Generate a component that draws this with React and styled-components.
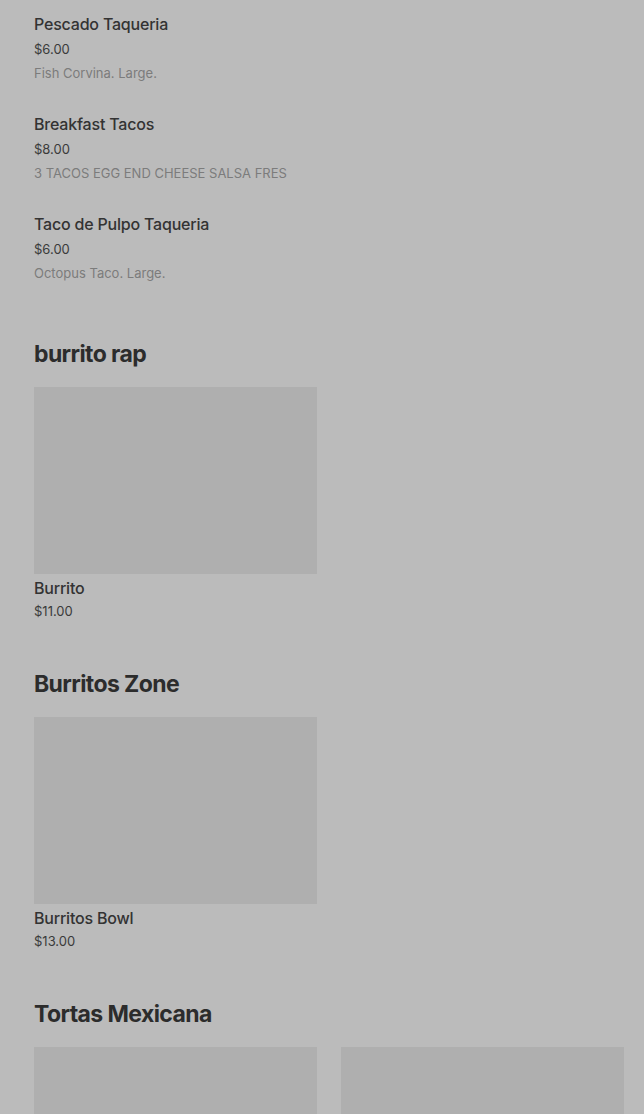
import React from 'react'
import styled, { createGlobalStyle } from 'styled-components'

const GlobalStyle = createGlobalStyle`
  html, body {
    margin: 0;
    padding: 0;
    background: #bbbbbb;
  }
  body {
    font-family: Inter, "Liberation Sans", sans-serif;
    color: #333333;
  }
`

const Page = styled.div`
  padding: 0 20px 0 34px;
`

const Section = styled.section`
  padding: ${p => (p.first ? '0' : '38px 0 10px')};
`

const Heading = styled.h2`
  margin: 0 0 17px;
  font-size: 23px;
  line-height: 32px;
  font-weight: 700;
  letter-spacing: -0.6px;
  color: #2c2c2c;
`

const ItemRow = styled.div`
  padding: 12px 0 17px;
`

const ItemName = styled.div`
  font-size: 16px;
  line-height: 24px;
  font-weight: 500;
  letter-spacing: -0.2px;
  color: #333333;
`

const Price = styled.div`
  margin-top: ${p => (p.compact ? '4px' : '3px')};
  font-size: 13px;
  line-height: ${p => (p.compact ? '18px' : '20px')};
  color: #3a3a3a;
`

const Desc = styled.div`
  margin-top: 4px;
  font-size: 13px;
  line-height: 20px;
  color: #7c7c7c;
`

const Grid = styled.div`
  display: grid;
  grid-template-columns: 283px 283px;
  column-gap: 24px;
`

const Card = styled.div`
  display: flex;
  flex-direction: column;
`

const Thumb = styled.div`
  height: 187px;
  background: #afafaf;
`

const CardName = styled.div`
  margin-top: 4px;
  font-size: 16px;
  line-height: 20px;
  font-weight: 500;
  letter-spacing: -0.2px;
  color: #333333;
`

const listItems = [
  { name: 'Pescado Taqueria', price: '$6.00', desc: 'Fish Corvina. Large.' },
  { name: 'Breakfast Tacos', price: '$8.00', desc: '3 TACOS EGG END CHEESE SALSA FRES' },
  { name: 'Taco de Pulpo Taqueria', price: '$6.00', desc: 'Octopus Taco. Large.' },
]

const sections = [
  { title: 'burrito rap', items: [{ name: 'Burrito', price: '$11.00' }] },
  { title: 'Burritos Zone', items: [{ name: 'Burritos Bowl', price: '$13.00' }] },
  { title: 'Tortas Mexicana', items: [{}, {}] },
]

export default function App() {
  return (
    <>
      <GlobalStyle />
      <Page>
        <Section first>
          {listItems.map(item => (
            <ItemRow key={item.name}>
              <ItemName>{item.name}</ItemName>
              <Price>{item.price}</Price>
              <Desc>{item.desc}</Desc>
            </ItemRow>
          ))}
        </Section>
        {sections.map(sec => (
          <Section key={sec.title}>
            <Heading>{sec.title}</Heading>
            <Grid>
              {sec.items.map((it, i) => (
                <Card key={i}>
                  <Thumb />
                  {it.name && <CardName>{it.name}</CardName>}
                  {it.price && <Price compact>{it.price}</Price>}
                </Card>
              ))}
            </Grid>
          </Section>
        ))}
      </Page>
    </>
  )
}
